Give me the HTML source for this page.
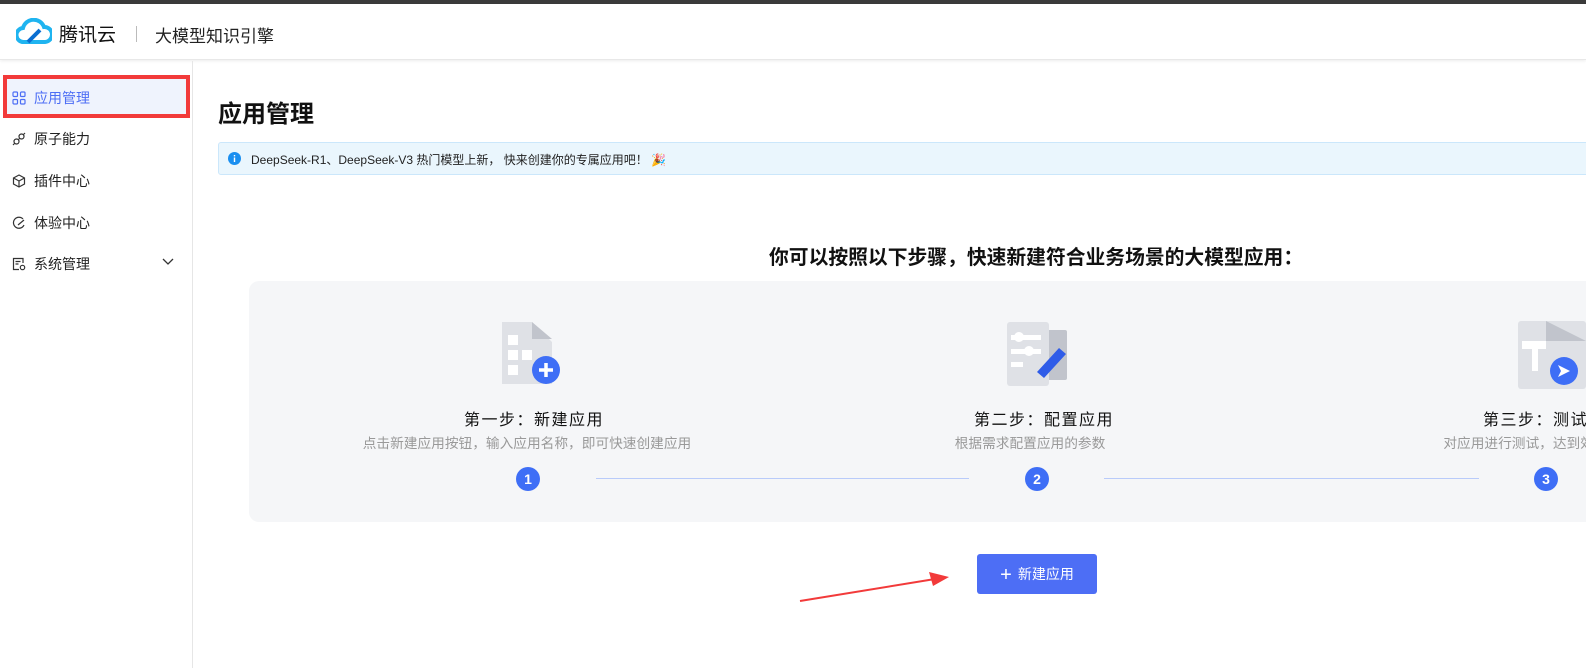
<!DOCTYPE html>
<html><head><meta charset="utf-8"><style>
*{margin:0;padding:0;box-sizing:border-box}
body{width:1586px;height:668px;overflow:hidden;background:#fff;font-family:"Liberation Sans","Noto Sans CJK SC",sans-serif;color:#222;position:relative}
.topbar{position:absolute;left:0;top:0;width:1586px;height:4px;background:#3a3a3a}
.header{position:absolute;left:0;top:4px;width:1586px;height:56px;background:#fff;box-shadow:0 1px 3px rgba(0,0,0,.08);border-bottom:1px solid #e8e8e8}
.side{position:absolute;left:0;top:61px;width:193px;height:607px;border-right:1px solid #e6e6e6}
.item{position:absolute;left:12px;font-size:14px;color:#222;display:flex;align-items:center;gap:8px}
.abs{position:absolute}
.step-t{position:absolute;font-size:16px;letter-spacing:1.5px;color:#111;white-space:nowrap;transform:translateX(-50%)}
.step-d{position:absolute;font-size:13.7px;color:#999;white-space:nowrap;transform:translateX(-50%)}
.num{position:absolute;width:24px;height:24px;border-radius:50%;background:#3e6ef6;color:#fff;font-weight:bold;font-size:14px;text-align:center;line-height:24px}
.line{position:absolute;height:1px;background:#b9cbfa;top:478px}
</style></head><body>
<div class="topbar"></div>
<div class="header">
<svg class="abs" style="left:16px;top:14px" width="36" height="28" viewBox="0 0 36 28"><path d="M8 24 A7 7 0 0 1 7 10 A11 11 0 0 1 28 9 A7.5 7.5 0 0 1 29 24 Z" fill="none" stroke="#1fb4f0" stroke-width="4"/><path d="M12 24 L24 12" stroke="#0a6ed1" stroke-width="4"/></svg>
<div class="abs" style="left:59px;top:16px;font-size:19px;color:#111">腾讯云</div>
<div class="abs" style="left:136px;top:22px;width:1px;height:16px;background:#bbb"></div>
<div class="abs" style="left:155px;top:18px;font-size:17px;color:#222">大模型知识引擎</div>
</div>
<div class="side">
<div class="abs" style="left:3px;top:14px;width:187px;height:43px;border:4px solid #f23a3a;background:#eff3fd"></div>
<div class="item" style="top:27px;color:#4d6ef5"><svg width="14" height="14" viewBox="0 0 14 14" fill="none" stroke="#4d6ef5" stroke-width="1.2"><rect x="1" y="1" width="4.5" height="4.5" rx="1"/><rect x="8.5" y="1" width="4.5" height="4.5" rx="1"/><rect x="1" y="8.5" width="4.5" height="4.5" rx="1"/><rect x="8.5" y="8.5" width="4.5" height="4.5" rx="1"/></svg>应用管理</div>
<div class="item" style="top:68px"><svg width="14" height="14" viewBox="0 0 14 14" fill="none" stroke="#333" stroke-width="1.2"><circle cx="4.5" cy="9.5" r="2.5"/><circle cx="9.5" cy="4.5" r="2.5"/><path d="M1 13l2-2M11 3l2-2M6 8l2-2"/></svg>原子能力</div>
<div class="item" style="top:110px"><svg width="14" height="14" viewBox="0 0 14 14" fill="none" stroke="#333" stroke-width="1.2"><path d="M7 1l5.5 3v6L7 13 1.5 10V4z M1.5 4L7 7l5.5-3M7 7v6"/></svg>插件中心</div>
<div class="item" style="top:152px"><svg width="14" height="14" viewBox="0 0 14 14" fill="none" stroke="#333" stroke-width="1.2"><path d="M11 3A5.5 5.5 0 1 0 12 9"/><path d="M6 9l6-5"/></svg>体验中心</div>
<div class="item" style="top:193px"><svg width="14" height="14" viewBox="0 0 14 14" fill="none" stroke="#333" stroke-width="1.2"><path d="M11 6V1.5H1.5v11H7M3.5 4.5h5M3.5 7h3"/><circle cx="10.5" cy="10.5" r="2.2"/></svg>系统管理</div>
<svg class="abs" style="left:162px;top:197px" width="12" height="8" viewBox="0 0 12 8"><path d="M1 1l5 5 5-5" fill="none" stroke="#333" stroke-width="1.3"/></svg>
</div>
<div class="abs" style="left:218px;top:94px;font-size:24px;font-weight:bold;color:#111">应用管理</div>
<div class="abs" style="left:218px;top:142px;width:1380px;height:33px;background:#eaf6fd;border:1px solid #cbe7fb;border-radius:3px"></div>
<svg class="abs" style="left:228px;top:152px" width="13" height="13" viewBox="0 0 13 13"><circle cx="6.5" cy="6.5" r="6.5" fill="#1a8ff0"/><rect x="5.8" y="5.5" width="1.4" height="4.5" fill="#fff"/><rect x="5.8" y="3" width="1.4" height="1.4" fill="#fff"/></svg>
<div class="abs" style="left:251px;top:151px;font-size:12px;color:#222">DeepSeek-R1、DeepSeek-V3 热门模型上新， 快来创建你的专属应用吧！ 🎉</div>
<div class="abs" style="left:769px;top:241px;font-size:19.8px;font-weight:bold;color:#111;white-space:nowrap">你可以按照以下步骤，快速新建符合业务场景的大模型应用：</div>
<div class="abs" style="left:249px;top:281px;width:1400px;height:241px;background:#f5f6f8;border-radius:10px"></div>
<svg class="abs" style="left:502px;top:322px" width="60" height="64" viewBox="0 0 60 64"><path d="M0 0h30l20 20v42H0z" fill="#dfe1e6"/><path d="M30 0v17h20" fill="#c1c4cc"/><g fill="#fff"><rect x="6" y="13" width="10" height="10"/><rect x="6" y="28" width="10" height="10"/><rect x="20" y="28" width="10" height="10"/><rect x="6" y="43" width="10" height="10"/></g><circle cx="44" cy="48" r="14" fill="#3e6ef6"/><path d="M44 41v14M37 48h14" stroke="#fff" stroke-width="3.5"/></svg>
<svg class="abs" style="left:1007px;top:322px" width="64" height="64" viewBox="0 0 64 64"><rect x="40" y="8" width="20" height="50" rx="2" fill="#c1c4cc"/><rect x="0" y="0" width="42" height="64" rx="3" fill="#dfe1e6"/><g fill="#fff"><rect x="4" y="13" width="30" height="5"/><rect x="4" y="27" width="30" height="5"/><rect x="4" y="40" width="12" height="5"/><circle cx="12" cy="15" r="5"/><circle cx="22" cy="29" r="5"/></g><path d="M30 50l22-24 7 6-22 24z" fill="#2f5ce8"/></svg>
<svg class="abs" style="left:1518px;top:321px" width="68" height="68" viewBox="0 0 68 68"><rect x="0" y="0" width="68" height="68" rx="3" fill="#dfe1e6"/><path d="M28 0v20h40" fill="#c1c4cc"/><path d="M4 20h24v8h-8v22h-6V28H4z" fill="#fff"/><circle cx="46" cy="50" r="14" fill="#3e6ef6"/><path d="M40 44l12 6-12 6 3-6z" fill="#fff"/></svg>
<div class="step-t" style="left:534px;top:406px">第一步：新建应用</div>
<div class="step-d" style="left:527px;top:432px">点击新建应用按钮，输入应用名称，即可快速创建应用</div>
<div class="step-t" style="left:1044px;top:406px">第二步：配置应用</div>
<div class="step-d" style="left:1030px;top:432px">根据需求配置应用的参数</div>
<div class="step-t" style="left:1553px;top:406px">第三步：测试应用</div>
<div class="step-d" style="left:1546px;top:432px">对应用进行测试，达到效果后发布</div>
<div class="num" style="left:516px;top:467px">1</div>
<div class="num" style="left:1025px;top:467px">2</div>
<div class="num" style="left:1534px;top:467px">3</div>
<div class="line" style="left:596px;width:373px"></div>
<div class="line" style="left:1104px;width:375px"></div>
<div class="abs" style="left:977px;top:554px;width:120px;height:40px;background:#4d6ef5;border-radius:3px;color:#fff;font-size:14px;line-height:40px;text-align:center"><span style="font-size:20px;vertical-align:-2px;margin-right:6px">+</span>新建应用</div>
<svg class="abs" style="left:795px;top:570px" width="160" height="36" viewBox="0 0 160 36"><path d="M5 31L140 9" stroke="#f23a3a" stroke-width="2"/><path d="M154 7L134 2l4 14z" fill="#f23a3a"/></svg>
</body></html>
